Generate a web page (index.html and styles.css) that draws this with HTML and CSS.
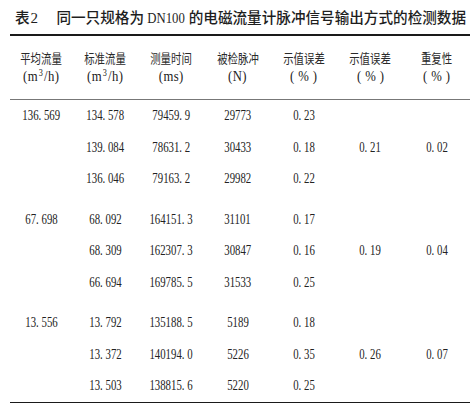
FILE: index.html
```html
<!DOCTYPE html>
<html lang="zh-CN">
<head>
  <meta charset="UTF-8">
  <meta name="viewport" content="width=device-width, initial-scale=1.0">
  <title>表2 DN100 电磁流量计检测数据</title>
  <link rel="stylesheet" href="styles.css">
</head>
<body>
  <div class="table-wrap">
    <h1 class="table-title">
      <span class="table-no">表<span class="latin">2</span></span>
      <span class="table-name">同一只规格为 <span class="latin">DN100</span> 的电磁流量计脉冲信号输出方式的检测数据</span>
    </h1>

    <table class="data-table">
      <colgroup>
        <col class="col-first">
        <col><col><col><col><col><col>
      </colgroup>
      <thead>
        <tr>
          <th><span class="cn">平均流量</span><br><span class="unit">(m<sup>3</sup>/h)</span></th>
          <th><span class="cn">标准流量</span><br><span class="unit">(m<sup>3</sup>/h)</span></th>
          <th><span class="cn">测量时间</span><br><span class="unit">(ms)</span></th>
          <th><span class="cn">被检脉冲</span><br><span class="unit">(N)</span></th>
          <th><span class="cn">示值误差</span><br><span class="unit">( % )</span></th>
          <th><span class="cn">示值误差</span><br><span class="unit">( % )</span></th>
          <th><span class="cn">重复性</span><br><span class="unit">( % )</span></th>
        </tr>
      </thead>
      <tbody>
        <tr>
          <td rowspan="3" class="top"><span>136. 569</span></td>
          <td><span>134. 578</span></td>
          <td><span>79459. 9</span></td>
          <td><span>29773</span></td>
          <td><span>0. 23</span></td>
          <td rowspan="3"><span>0. 21</span></td>
          <td rowspan="3"><span>0. 02</span></td>
        </tr>
        <tr>
          <td><span>139. 084</span></td>
          <td><span>78631. 2</span></td>
          <td><span>30433</span></td>
          <td><span>0. 18</span></td>
        </tr>
        <tr>
          <td><span>136. 046</span></td>
          <td><span>79163. 2</span></td>
          <td><span>29982</span></td>
          <td><span>0. 22</span></td>
        </tr>

        <tr class="group-start">
          <td rowspan="3" class="top"><span>67. 698</span></td>
          <td><span>68. 092</span></td>
          <td><span>164151. 3</span></td>
          <td><span>31101</span></td>
          <td><span>0. 17</span></td>
          <td rowspan="3"><span>0. 19</span></td>
          <td rowspan="3"><span>0. 04</span></td>
        </tr>
        <tr>
          <td><span>68. 309</span></td>
          <td><span>162307. 3</span></td>
          <td><span>30847</span></td>
          <td><span>0. 16</span></td>
        </tr>
        <tr>
          <td><span>66. 694</span></td>
          <td><span>169785. 5</span></td>
          <td><span>31533</span></td>
          <td><span>0. 25</span></td>
        </tr>

        <tr class="group-start">
          <td rowspan="3" class="top last"><span>13. 556</span></td>
          <td><span>13. 792</span></td>
          <td><span>135188. 5</span></td>
          <td><span>5189</span></td>
          <td><span>0. 18</span></td>
          <td rowspan="3" class="last"><span>0. 26</span></td>
          <td rowspan="3" class="last"><span>0. 07</span></td>
        </tr>
        <tr>
          <td><span>13. 372</span></td>
          <td><span>140194. 0</span></td>
          <td><span>5226</span></td>
          <td><span>0. 35</span></td>
        </tr>
        <tr class="last-row">
          <td><span>13. 503</span></td>
          <td><span>138815. 6</span></td>
          <td><span>5220</span></td>
          <td><span>0. 25</span></td>
        </tr>
      </tbody>
    </table>
  </div>
</body>
</html>
```

FILE: styles.css
```css
/* Reset */
* {
  box-sizing: border-box;
  margin: 0;
  padding: 0;
}

body {
  background-color: #fff;
  color: #222;
  font-family: "Liberation Serif", "Noto Sans CJK SC", serif;
  overflow: hidden;
}

.table-wrap {
  width: 474px;
  padding: 0 4px 0 10px;
}

/* Caption line */
.table-title {
  height: 34px;
  line-height: 34px;
  padding-left: 5px;
  font-family: "Noto Sans CJK SC", sans-serif;
  font-size: 14.6px;
  font-weight: 500;
  color: #1e1e1e;
  white-space: nowrap;
}

.table-no {
  margin-right: 15px;
}

.table-title .latin {
  font-family: "Liberation Serif", serif;
  font-size: 15px;
}

.table-no .latin {
  margin-left: 1px;
}

.table-name .latin {
  display: inline-block;
  transform: scaleX(0.85);
  margin: 0 -3px;
}

/* Three-line table */
.data-table {
  width: 460px;
  border-collapse: separate;
  border-spacing: 0;
  table-layout: fixed;
}

.data-table col {
  width: 66.33px;
}

.data-table .col-first {
  width: 62px;
}

.data-table th,
.data-table td {
  text-align: center;
  font-weight: normal;
}

.data-table th span,
.data-table td span {
  display: inline-block;
  transform: scaleX(0.72);
  white-space: nowrap;
}

.data-table th {
  border-top: 2px solid #1a1a1a;
  border-bottom: 1px solid #777;
  padding: 13px 0 14px;
  line-height: 18px;
}

.data-table th .cn {
  font-family: "Noto Sans CJK SC", sans-serif;
  font-size: 13px;
  transform: scaleX(0.8);
  color: #2a2a2a;
}

.data-table th .unit {
  font-size: 15.5px;
  letter-spacing: 0.5px;
  transform: scaleX(0.82);
}

.data-table sup {
  font-size: 10px;
  vertical-align: 5px;
  line-height: 0;
  padding: 0 1px;
}

.data-table td {
  font-size: 15px;
  line-height: 31.5px;
  vertical-align: middle;
}

.data-table td.top {
  vertical-align: top;
}

.data-table .group-start td {
  padding-top: 9px;
}

.data-table .last-row td,
.data-table td.last {
  border-bottom: 2px solid #1a1a1a;
}
```
